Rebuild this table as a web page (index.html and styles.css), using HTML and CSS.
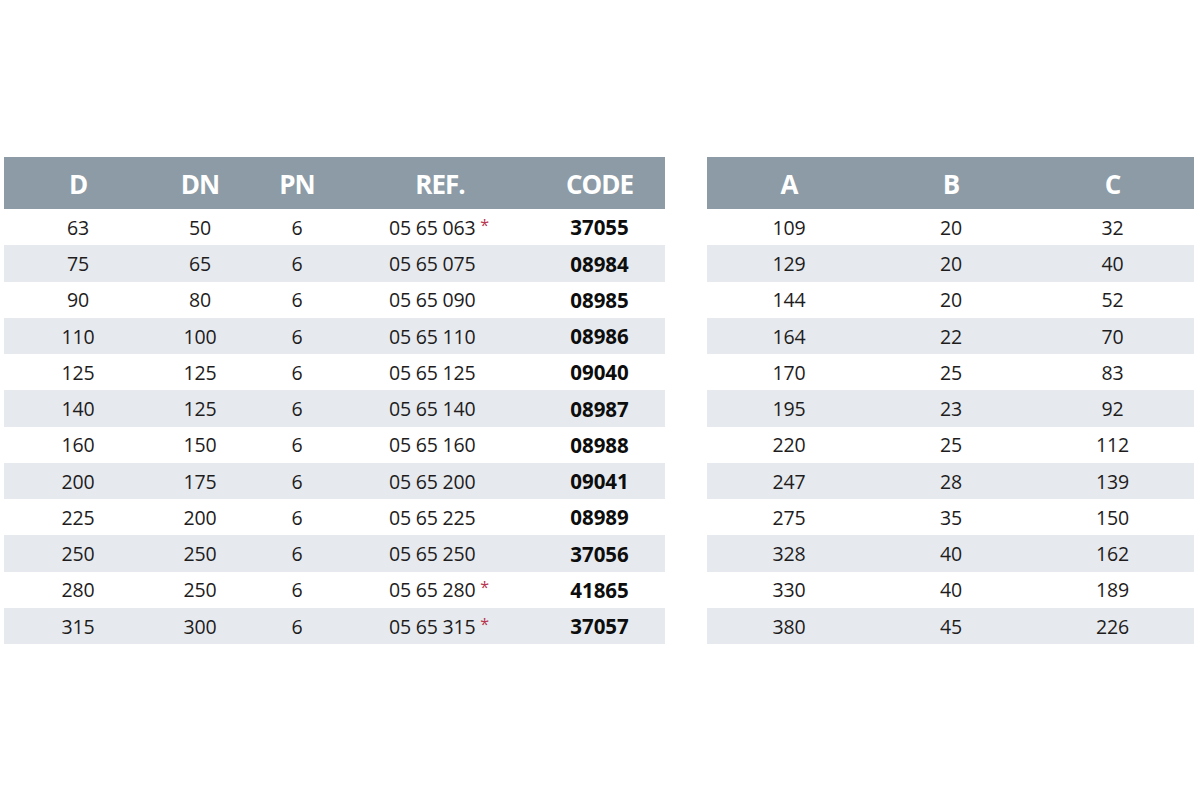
FILE: index.html
```html
<!DOCTYPE html>
<html>
<head>
<meta charset="utf-8">
<link rel="stylesheet" href="styles.css">
</head>
<body>
<div class="page">
  <div class="tbl tbl-left">
    <div class="row head">
      <div class="c">D</div><div class="c">DN</div><div class="c">PN</div><div class="c">REF.</div><div class="c">CODE</div>
    </div>
    <div class="row"><div class="c">63</div><div class="c">50</div><div class="c">6</div><div class="c ref">05 65 063 <span class="ast">*</span></div><div class="c code">37055</div></div>
    <div class="row alt"><div class="c">75</div><div class="c">65</div><div class="c">6</div><div class="c ref">05 65 075</div><div class="c code">08984</div></div>
    <div class="row"><div class="c">90</div><div class="c">80</div><div class="c">6</div><div class="c ref">05 65 090</div><div class="c code">08985</div></div>
    <div class="row alt"><div class="c">110</div><div class="c">100</div><div class="c">6</div><div class="c ref">05 65 110</div><div class="c code">08986</div></div>
    <div class="row"><div class="c">125</div><div class="c">125</div><div class="c">6</div><div class="c ref">05 65 125</div><div class="c code">09040</div></div>
    <div class="row alt"><div class="c">140</div><div class="c">125</div><div class="c">6</div><div class="c ref">05 65 140</div><div class="c code">08987</div></div>
    <div class="row"><div class="c">160</div><div class="c">150</div><div class="c">6</div><div class="c ref">05 65 160</div><div class="c code">08988</div></div>
    <div class="row alt"><div class="c">200</div><div class="c">175</div><div class="c">6</div><div class="c ref">05 65 200</div><div class="c code">09041</div></div>
    <div class="row"><div class="c">225</div><div class="c">200</div><div class="c">6</div><div class="c ref">05 65 225</div><div class="c code">08989</div></div>
    <div class="row alt"><div class="c">250</div><div class="c">250</div><div class="c">6</div><div class="c ref">05 65 250</div><div class="c code">37056</div></div>
    <div class="row"><div class="c">280</div><div class="c">250</div><div class="c">6</div><div class="c ref">05 65 280 <span class="ast">*</span></div><div class="c code">41865</div></div>
    <div class="row alt"><div class="c">315</div><div class="c">300</div><div class="c">6</div><div class="c ref">05 65 315 <span class="ast">*</span></div><div class="c code">37057</div></div>
  </div>
  <div class="tbl tbl-right">
    <div class="row head"><div class="c">A</div><div class="c">B</div><div class="c">C</div></div>
    <div class="row"><div class="c">109</div><div class="c">20</div><div class="c">32</div></div>
    <div class="row alt"><div class="c">129</div><div class="c">20</div><div class="c">40</div></div>
    <div class="row"><div class="c">144</div><div class="c">20</div><div class="c">52</div></div>
    <div class="row alt"><div class="c">164</div><div class="c">22</div><div class="c">70</div></div>
    <div class="row"><div class="c">170</div><div class="c">25</div><div class="c">83</div></div>
    <div class="row alt"><div class="c">195</div><div class="c">23</div><div class="c">92</div></div>
    <div class="row"><div class="c">220</div><div class="c">25</div><div class="c">112</div></div>
    <div class="row alt"><div class="c">247</div><div class="c">28</div><div class="c">139</div></div>
    <div class="row"><div class="c">275</div><div class="c">35</div><div class="c">150</div></div>
    <div class="row alt"><div class="c">328</div><div class="c">40</div><div class="c">162</div></div>
    <div class="row"><div class="c">330</div><div class="c">40</div><div class="c">189</div></div>
    <div class="row alt"><div class="c">380</div><div class="c">45</div><div class="c">226</div></div>
  </div>
</div>
</body>
</html>
```

FILE: styles.css
```css
* { box-sizing: border-box; }
html, body { margin: 0; padding: 0; background: #ffffff; }
body {
  font-family: "Open Sans", "Liberation Sans", sans-serif;
  color: #1e1c1d;
  width: 1200px;
  height: 800px;
  overflow: hidden;
}
.page {
  display: flex;
  align-items: flex-start;
  gap: 42px;
  padding: 157px 0 0 4px;
}
.tbl { display: flex; flex-direction: column; }
.tbl-left { width: 661px; }
.tbl-right { width: 487px; }
.row {
  display: grid;
  height: 36.25px;
  align-items: center;
  font-size: 19.5px;
  letter-spacing: -0.2px;
  padding-top: 1px;
}
.tbl-left .row { grid-template-columns: 148px 96px 98px 188px 1fr; }
.tbl-right .row { grid-template-columns: 164px 160px 1fr; }
.row.head {
  height: 52px;
  background: #8c9ba6;
  color: #ffffff;
  font-weight: 700;
  font-size: 26px;
  letter-spacing: -1px;
  padding-top: 2px;
}
.row.alt { background: #e6eaee; }
.c { text-align: center; line-height: 1; white-space: nowrap; }
.c.ref { text-align: left; padding-left: 43px; }
.c.code { font-weight: 700; font-size: 20.5px; letter-spacing: 0; color: #0d0d0d; }
.ast { color: #b8344f; font-size: 16px; position: relative; top: -4px; }
```
